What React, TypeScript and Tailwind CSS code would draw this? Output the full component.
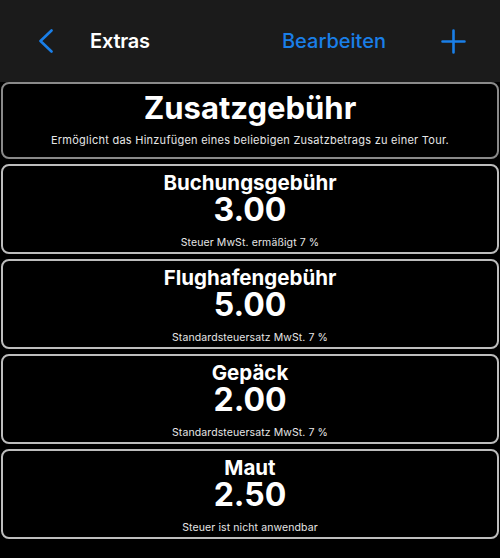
const extras = [
  { name: 'Buchungsgebühr', amount: '3.00', tax: 'Steuer MwSt. ermäßigt 7 %' },
  { name: 'Flughafengebühr', amount: '5.00', tax: 'Standardsteuersatz MwSt. 7 %' },
  { name: 'Gepäck', amount: '2.00', tax: 'Standardsteuersatz MwSt. 7 %' },
  { name: 'Maut', amount: '2.50', tax: 'Steuer ist nicht anwendbar' },
];

const App = () => {
  return (
    <div className="h-[558px] w-[500px] overflow-hidden bg-black font-['Inter',sans-serif] text-white">
      <header className="flex h-[82px] items-center bg-[#1b1b1b] pl-[38px] pr-[34px]">
        <svg width="16" height="24" viewBox="0 0 16 24" fill="none" className="text-[#1a7fe8]">
          <polyline
            points="13.5,1.5 2.5,12 13.5,22.5"
            stroke="currentColor"
            strokeWidth="2.6"
            strokeLinecap="round"
            strokeLinejoin="round"
          />
        </svg>
        <h1 className="ml-[36px] text-[20px] font-semibold tracking-[-0.2px]">Extras</h1>
        <button className="ml-auto text-[20px] font-medium text-[#1a7fe8]">Bearbeiten</button>
        <svg width="25" height="25" viewBox="0 0 25 25" fill="none" className="ml-[55px] text-[#1a7fe8]">
          <path d="M12.5 1.5v22M1.5 12.5h22" stroke="currentColor" strokeWidth="2.6" strokeLinecap="round" />
        </svg>
      </header>

      <div className="flex flex-col gap-[5px] px-px">
        <section className="flex h-[77px] flex-col items-center rounded-[8px] border-2 border-[#8a8a8a] pt-[4px]">
          <h2 className="text-[31px] font-bold leading-[40px]">Zusatzgebühr</h2>
          <p className="mt-[4px] text-[11px] tracking-[0.25px] text-[#e6e6e6]">
            Ermöglicht das Hinzufügen eines beliebigen Zusatzbetrags zu einer Tour.
          </p>
        </section>

        {extras.map((extra) => (
          <section
            key={extra.name}
            className="flex h-[90px] flex-col items-center rounded-[8px] border-2 border-[#bdbdbd] pt-[6px]"
          >
            <h3 className="text-[20.5px] font-bold leading-[22px]">{extra.name}</h3>
            <p className="text-[32px] font-bold leading-[32px]">{extra.amount}</p>
            <p className="mt-[9px] text-[10.5px] tracking-[0.1px] text-[#e6e6e6]">{extra.tax}</p>
          </section>
        ))}
      </div>
    </div>
  );
};

export default App;
